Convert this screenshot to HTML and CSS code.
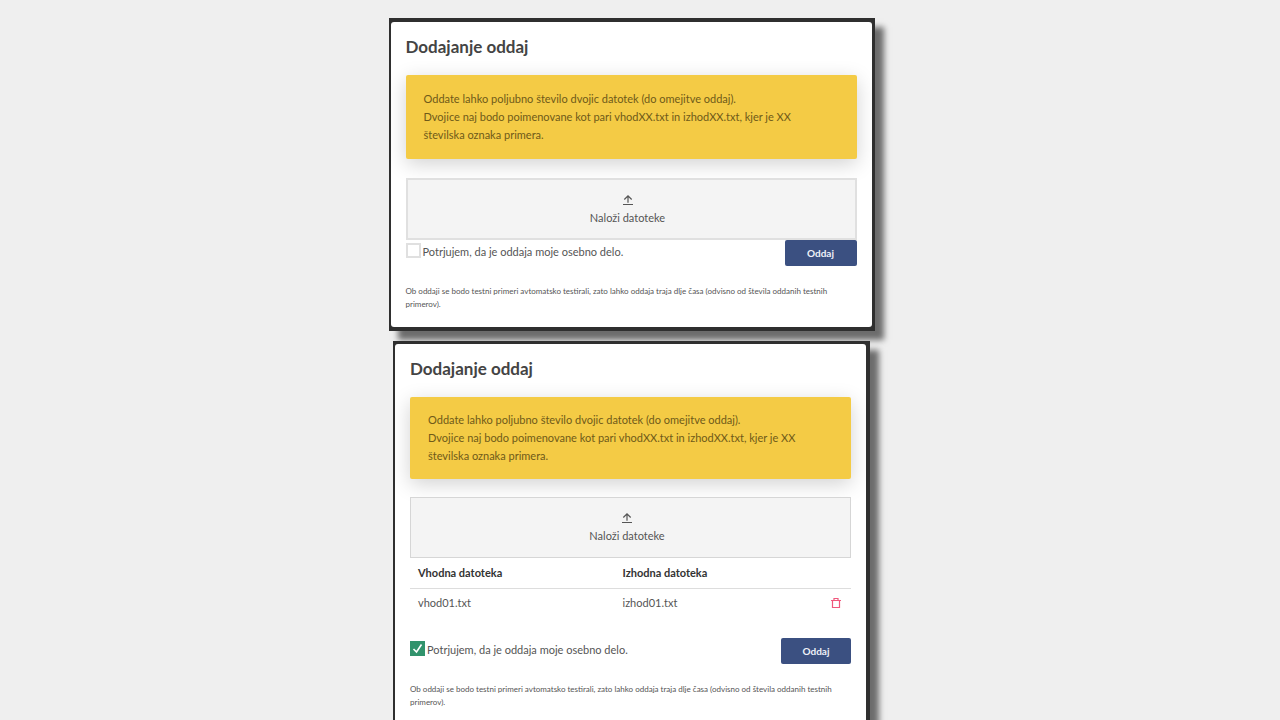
FILE: index.html
```html
<!DOCTYPE html>
<html lang="sl">
<head>
<meta charset="utf-8">
<meta name="viewport" content="width=device-width, initial-scale=1">
<title>Dodajanje oddaj</title>
<link rel="stylesheet" href="styles.css">
</head>
<body>
<main class="page">
  <section class="frame">
    <form class="dialog">
      <h2 class="title">Dodajanje oddaj</h2>
      <p class="notice">Oddate lahko poljubno število dvojic datotek (do omejitve oddaj).<br>Dvojice naj bodo poimenovane kot pari vhodXX.txt in izhodXX.txt, kjer je XX številska oznaka primera.</p>
      <button type="button" class="upload">
        <svg class="upload-icon" viewBox="0 0 12 12" aria-hidden="true"><path d="M1 10.500h10M6 8.800V2M2.300 5.500 6 1.800l3.700 3.700"/></svg>
        <span>Naloži datoteke</span>
      </button>
      <div class="actions">
        <label class="confirm"><input type="checkbox" class="check"><span>Potrjujem, da je oddaja moje osebno delo.</span></label>
        <button type="submit" class="submit">Oddaj</button>
      </div>
      <p class="note">Ob oddaji se bodo testni primeri avtomatsko testirali, zato lahko oddaja traja dlje časa (odvisno od števila oddanih testnih primerov).</p>
    </form>
  </section>
  <section class="frame frame-filled">
    <form class="dialog">
      <h2 class="title">Dodajanje oddaj</h2>
      <p class="notice">Oddate lahko poljubno število dvojic datotek (do omejitve oddaj).<br>Dvojice naj bodo poimenovane kot pari vhodXX.txt in izhodXX.txt, kjer je XX številska oznaka primera.</p>
      <button type="button" class="upload">
        <svg class="upload-icon" viewBox="0 0 12 12" aria-hidden="true"><path d="M1 10.500h10M6 8.800V2M2.300 5.500 6 1.800l3.700 3.700"/></svg>
        <span>Naloži datoteke</span>
      </button>
      <table class="files">
        <thead>
          <tr><th scope="col">Vhodna datoteka</th><th scope="col">Izhodna datoteka</th><td class="tool"></td></tr>
        </thead>
        <tbody>
          <tr>
            <td>vhod01.txt</td><td>izhod01.txt</td>
            <td class="tool"><button type="button" class="remove" aria-label="Odstrani"><svg class="trash" viewBox="0 0 10 10" aria-hidden="true"><path d="M0 2.500h10M3 2.500v-2h4v2M1.500 2.500v7h7v-7"/></svg></button></td>
          </tr>
        </tbody>
      </table>
      <div class="actions">
        <label class="confirm"><input type="checkbox" class="check" checked><span>Potrjujem, da je oddaja moje osebno delo.</span></label>
        <button type="submit" class="submit">Oddaj</button>
      </div>
      <p class="note">Ob oddaji se bodo testni primeri avtomatsko testirali, zato lahko oddaja traja dlje časa (odvisno od števila oddanih testnih primerov).</p>
    </form>
  </section>
</main>
</body>
</html>
```
FILE: styles.css
```css
* {
  box-sizing: border-box;
}

body {
  margin: 0;
  background: #efefef;
  color: #555;
  font: 11px/18px Lato, "Noto Sans", sans-serif;
}

button {
  font: inherit;
  color: inherit;
  cursor: pointer;
}

.page {
  display: flex;
  flex-direction: column;
  align-items: center;
  gap: 10px;
  min-height: 100vh;
  padding: 18px 17px 0 0;
}

.frame {
  width: 100%;
  max-width: 486px;
  padding: 4px 3px 4px 2px;
  background: #2f2f2f;
  box-shadow: 9px 9px 6px rgba(0, 0, 0, 0.55);
}

.dialog {
  padding: 15px 15px 16px;
  background: #fff;
  border-radius: 3px;
}

.title {
  margin: 0 0 18px;
  color: #444;
  font-size: 17px;
  line-height: 20px;
  font-weight: 700;
}

.notice {
  margin: 0 0 19px;
  padding: 15px 48px 15px 18px;
  background: #f4cb45;
  border-radius: 2px;
  color: #6f5a19;
  box-shadow: 0 5px 20px rgba(0, 0, 0, 0.18);
}

.upload {
  display: flex;
  flex-direction: column;
  align-items: center;
  width: 100%;
  padding: 14px 7px 11px 0;
  background: #f4f4f4;
  border: 2px solid #e0e0e0;
}

.upload-icon {
  width: 12px;
  height: 12px;
  margin-bottom: 3px;
  fill: none;
  stroke: #555;
  stroke-width: 1.2;
}

.actions {
  display: flex;
  align-items: flex-start;
  justify-content: space-between;
}

.confirm {
  display: flex;
  align-items: flex-start;
  gap: 2px;
  padding-top: 3px;
}

.check {
  appearance: none;
  width: 15px;
  height: 15px;
  margin: 0;
  background: #fff;
  border: 2px solid #e0e0e0;
}

.check:checked {
  border: 0;
  background: #31936c url("data:image/svg+xml,%3Csvg xmlns='http://www.w3.org/2000/svg' viewBox='0 0 15 15'%3E%3Cpath d='M3.500 8l3 3 5-7.500' fill='none' stroke='white' stroke-width='1.600'/%3E%3C/svg%3E");
}

.submit {
  width: 72px;
  height: 26px;
  padding: 0;
  border: 0;
  border-radius: 2px;
  background: #3b5081;
  color: #eef1f8;
  font-size: 10px;
  font-weight: 700;
}

.note {
  margin: 19px 0 0;
  font-size: 8px;
  line-height: 13px;
}

.frame-filled {
  display: flex;
  flex-direction: column;
  flex-grow: 1;
  max-width: 477px;
  padding: 3px 4px 0 2px;
}

.frame-filled .dialog {
  flex-grow: 1;
  padding-bottom: 9px;
  border-radius: 3px 3px 0 0;
}

.frame-filled .notice {
  margin-bottom: 18px;
  padding-top: 14px;
  padding-bottom: 14px;
}

.frame-filled .upload {
  padding-bottom: 12px;
  border: 1px solid #d6d6d6;
}

.files {
  width: 100%;
  margin-bottom: 20px;
  border-collapse: collapse;
  table-layout: fixed;
  text-align: left;
}

.files th,
.files td {
  height: 30px;
  padding: 0 8px;
}

.files th {
  color: #333;
}

.files thead tr {
  border-bottom: 1px solid #ddd;
}

.files .tool {
  width: 32px;
}

.remove {
  display: block;
  padding: 4px;
  border: 0;
  background: none;
}

.trash {
  display: block;
  width: 10px;
  height: 10px;
  fill: none;
  stroke: #f0587c;
  stroke-width: 1.2;
}

.frame-filled .submit {
  width: 70px;
}
```
